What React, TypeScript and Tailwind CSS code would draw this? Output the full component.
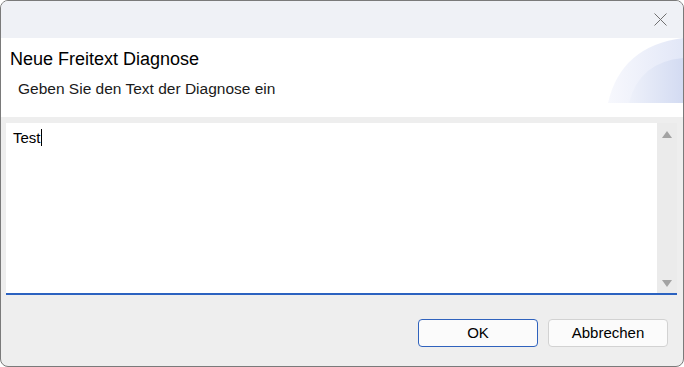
function HeaderArt() {
  return (
    <svg
      className="absolute right-0 top-0"
      width="76"
      height="66"
      viewBox="0 0 76 66"
      aria-hidden="true"
    >
      <defs>
        <linearGradient id="artA" x1="0" y1="0" x2="1" y2="0">
          <stop offset="0" stopColor="#f7f8fd" />
          <stop offset="1" stopColor="#e2e7f7" />
        </linearGradient>
        <linearGradient id="artB" x1="0" y1="0" x2="1" y2="0">
          <stop offset="0" stopColor="#eef1fa" />
          <stop offset="1" stopColor="#d3dbf2" />
        </linearGradient>
      </defs>
      <path d="M1 65 Q 14 8 76 0 L76 65 Z" fill="url(#artA)" />
      <path d="M22 65 Q 32 24 76 20 L76 65 Z" fill="url(#artB)" />
    </svg>
  );
}

export default function App() {
  return (
    <div
      className="flex h-[367px] w-[684px] flex-col overflow-hidden rounded-[8px] border border-[#7a7a7a] bg-[#eeeeee] text-black"
      style={{ fontFamily: '"Liberation Sans", Arial, sans-serif' }}
    >
      {/* title bar */}
      <div className="flex h-[37px] shrink-0 items-start justify-end bg-[#eff1f6] pr-[16px] pt-[12px]">
        <svg width="13" height="13" viewBox="0 0 13 13" aria-hidden="true">
          <path d="M0.5 0.5 L12.5 12.5 M12.5 0.5 L0.5 12.5" stroke="#707070" strokeWidth="1" />
        </svg>
      </div>

      <div className="relative h-[79px] shrink-0 bg-white">
        <HeaderArt />
        <p className="pl-[9px] pt-[10px] text-[18px] leading-[22px]">Neue Freitext Diagnose</p>
        <p className="pl-[17px] pt-[9px] text-[15.5px] leading-[19px] text-[#1a1a1a]">
          Geben Sie den Text der Diagnose ein
        </p>
      </div>

      <div className="h-[6px] shrink-0" />

      <div className="ml-[5px] mr-[6px] flex h-[172px] shrink-0 flex-col">
        <div className="flex min-h-0 flex-1 bg-white">
          <div className="flex-1 pl-[7px] pt-[3px]">
            <span className="text-[15px] leading-[18px]">Test</span>
            <span className="inline-block h-[17px] w-px translate-y-[3px] bg-black" />
          </div>
          <div className="flex w-[20px] flex-col items-center justify-between bg-[#ebebeb] pb-[6px] pt-[8px]">
            <svg width="10" height="7" viewBox="0 0 10 7" aria-hidden="true">
              <path d="M5 0 L10 7 L0 7 Z" fill="#a3a3a3" />
            </svg>
            <svg width="10" height="7" viewBox="0 0 10 7" aria-hidden="true">
              <path d="M0 0 L10 0 L5 7 Z" fill="#a3a3a3" />
            </svg>
          </div>
        </div>
        <div className="h-[2px] bg-[#2b62c0]" />
      </div>

      <div className="flex flex-1 items-start justify-end gap-[10px] pr-[15px] pt-[24px]">
        <button className="h-[28px] w-[120px] rounded-[4px] border border-[#2f62bd] bg-[#fbfbfb] text-[15px]">
          OK
        </button>
        <button className="h-[28px] w-[120px] rounded-[4px] border border-[#d2d2d2] bg-[#fbfbfb] text-[15px]">
          Abbrechen
        </button>
      </div>
    </div>
  );
}
